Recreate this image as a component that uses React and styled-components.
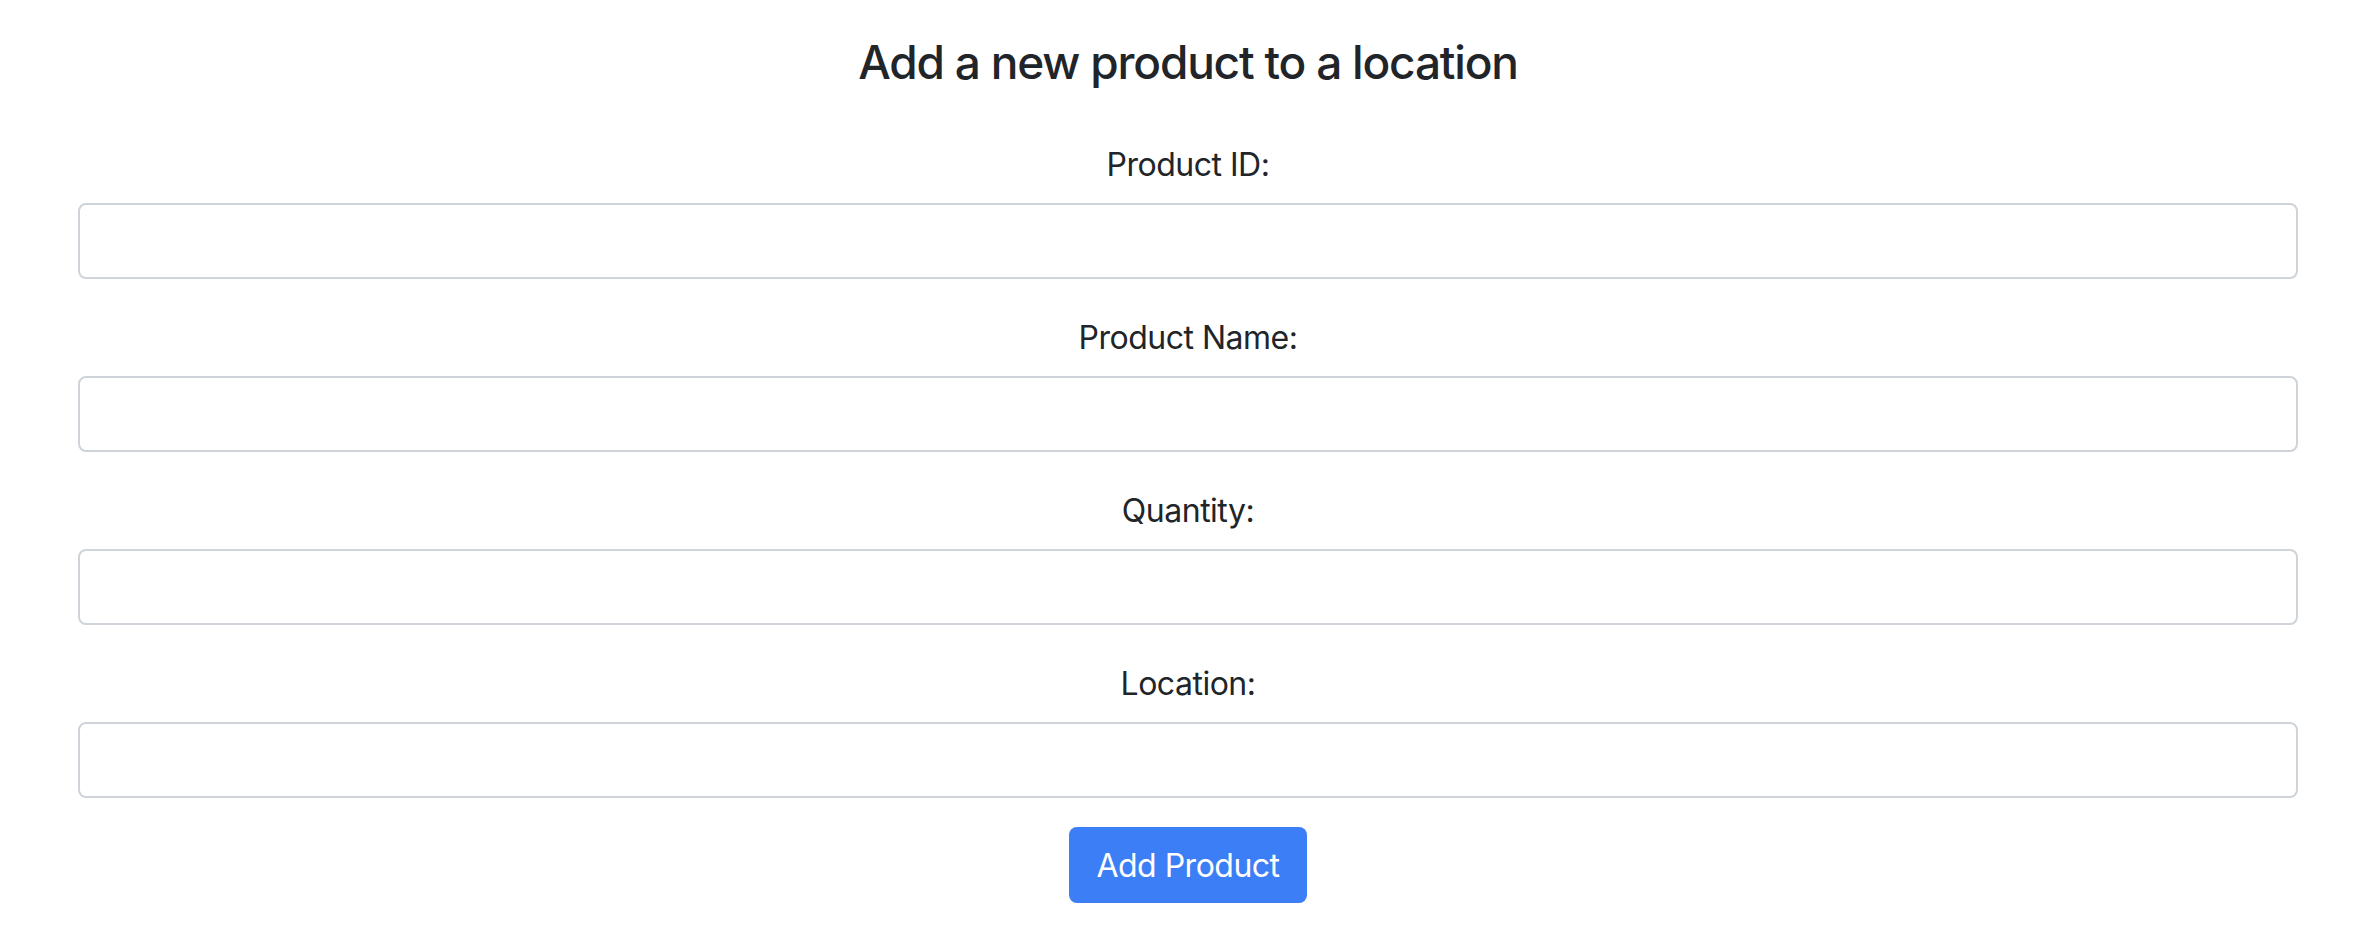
import React, { useState } from 'react';
import styled, { createGlobalStyle } from 'styled-components';

const GlobalStyle = createGlobalStyle`
    * { box-sizing: border-box; }
    body {
        margin: 0;
        background: #ffffff;
        color: #212529;
        font-family: Inter, "Noto Sans", sans-serif;
    }
`

const Page = styled.div`
    padding: 33px 78px 0 78px;
    display: flex;
    flex-direction: column;
    align-items: center;
`

const Title = styled.h2`
    margin: 0 0 50px 0;
    font-size: 46px;
    line-height: 58px;
    font-weight: 500;
    letter-spacing: -1.2px;
    color: #212529;
    text-align: center;
`

const Form = styled.form`
    width: 100%;
    display: flex;
    flex-direction: column;
    align-items: center;
`

const Field = styled.div`
    width: 100%;
    display: flex;
    flex-direction: column;
    align-items: center;
    gap: 14px;
    margin-bottom: 35px;
    &:last-of-type {
        margin-bottom: 29px;
    }
`

const Label = styled.label`
    font-size: 32px;
    line-height: 48px;
    letter-spacing: -0.5px;
    color: #212529;
`

const Input = styled.input`
    width: 100%;
    height: 76px;
    padding: 12px 24px;
    font-size: 32px;
    font-family: inherit;
    color: #212529;
    background: #fff;
    border: 2px solid #ced4da;
    border-radius: 8px;
    outline: none;
`

const Button = styled.button`
    height: 76px;
    padding: 0 27px;
    background: #3b7ef6;
    color: #fff;
    border: none;
    border-radius: 8px;
    font-size: 32px;
    letter-spacing: -0.5px;
    font-family: inherit;
    cursor: pointer;
`

const fields = [
    { id: 'productId', label: 'Product ID:' },
    { id: 'productName', label: 'Product Name:' },
    { id: 'quantity', label: 'Quantity:' },
    { id: 'location', label: 'Location:' },
]

function App(){
    const [values, setValues] = useState({})

    return (
        <>
            <GlobalStyle />
            <Page>
                <Title>Add a new product to a location</Title>
                <Form onSubmit={e => e.preventDefault()}>
                    {fields.map(f => (
                        <Field key={f.id}>
                            <Label htmlFor={f.id}>{f.label}</Label>
                            <Input
                                id={f.id}
                                value={values[f.id] || ''}
                                onChange={e => setValues({ ...values, [f.id]: e.target.value })}
                            />
                        </Field>
                    ))}
                    <Button type="submit">Add Product</Button>
                </Form>
            </Page>
        </>
    )
}

export default App
